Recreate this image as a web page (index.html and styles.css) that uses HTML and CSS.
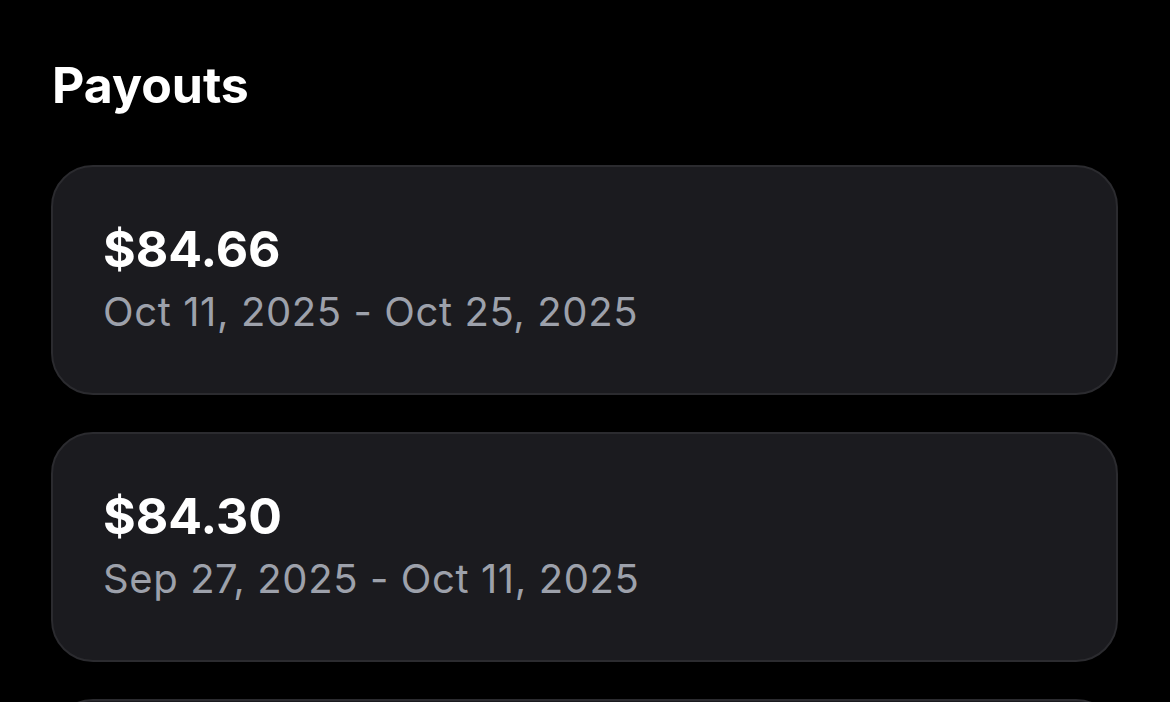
FILE: index.html
```html
<!DOCTYPE html>
<html>
<head>
<meta charset="utf-8">
<link rel="stylesheet" href="styles.css">
</head>
<body>
<main class="page">
  <h1 class="title">Payouts</h1>
  <ul class="list">
    <li class="card">
      <div class="amount">$84.66</div>
      <div class="range">Oct 11, 2025 - Oct 25, 2025</div>
    </li>
    <li class="card">
      <div class="amount">$84.30</div>
      <div class="range">Sep 27, 2025 - Oct 11, 2025</div>
    </li>
    <li class="card"></li>
  </ul>
</main>
</body>
</html>
```
FILE: styles.css
```css
html, body {
  margin: 0;
  padding: 0;
  background: #000;
  height: 100%;
  overflow: hidden;
}
.page {
  padding: 55px 52px 0 51px;
  font-family: Inter, "Noto Sans", "Liberation Sans", sans-serif;
  color: #fff;
}
.title {
  margin: 0 0 50px 1px;
  font-size: 50px;
  font-weight: 700;
  line-height: 60px;
  letter-spacing: 0;
}
.list {
  list-style: none;
  margin: 0;
  padding: 0;
  display: flex;
  flex-direction: column;
  gap: 37px;
}
.card {
  box-sizing: border-box;
  height: 230px;
  flex-shrink: 0;
  background: #1b1b1f;
  border: 2px solid #2b2b2f;
  border-radius: 42px;
  padding: 52px 50px 0 50px;
  display: flex;
  flex-direction: column;
  gap: 8px;
}
.amount {
  font-size: 50px;
  font-weight: 700;
  line-height: 60px;
}
.range {
  font-size: 40px;
  font-weight: 400;
  line-height: 50px;
  letter-spacing: 0.6px;
  color: #9da1ab;
}
```
